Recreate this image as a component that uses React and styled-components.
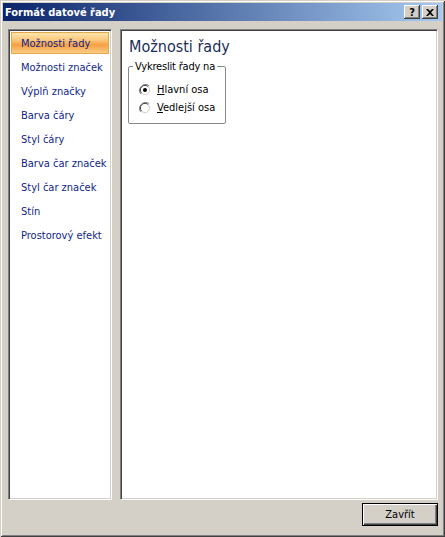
import React from 'react';
import styled, { createGlobalStyle } from 'styled-components';

const GlobalStyle = createGlobalStyle`
  html, body {
    margin: 0;
    padding: 0;
    background: #d4d0c8;
  }
  body {
    font-family: Tahoma, "DejaVu Sans Condensed", "Liberation Sans", sans-serif;
    font-size: 11px;
  }
`;

const navItems = [
  'Možnosti řady',
  'Možnosti značek',
  'Výplň značky',
  'Barva čáry',
  'Styl čáry',
  'Barva čar značek',
  'Styl čar značek',
  'Stín',
  'Prostorový efekt',
];

const Window = styled.div`
  width: 445px;
  height: 537px;
  box-sizing: border-box;
  background: #d4d0c8;
  padding: 3px;
  display: flex;
  flex-direction: column;
  box-shadow: inset 1px 1px #d4d0c8, inset -1px -1px #404040,
    inset 2px 2px #ffffff, inset -2px -2px #808080;
`;

const TitleBar = styled.div`
  height: 18px;
  display: flex;
  align-items: center;
  justify-content: space-between;
  padding: 0 4px 0 2px;
  background: linear-gradient(to right, #0a246a, #a6caf0);
`;

const Title = styled.span`
  color: #fff;
  font-weight: bold;
  font-size: 11px;
`;

const TitleButtons = styled.div`
  display: flex;
  gap: 2px;
`;

const TitleButton = styled.div`
  width: 16px;
  height: 14px;
  box-sizing: border-box;
  background: #d4d0c8;
  display: flex;
  align-items: center;
  justify-content: center;
  font-weight: bold;
  font-size: 11px;
  color: #000;
  box-shadow: inset -1px -1px #404040, inset 1px 1px #ffffff,
    inset -2px -2px #808080;
`;

const Body = styled.div`
  flex: 1;
  display: flex;
  flex-direction: column;
  padding: 8px 4px 8px 5px;
`;

const Panels = styled.div`
  flex: 1;
  display: flex;
  gap: 8px;
`;

const Sunken = styled.div`
  box-sizing: border-box;
  background: #fff;
  border: 1px solid;
  border-color: #808080 #ffffff #ffffff #808080;
  box-shadow: inset 1px 1px #404040, inset -1px -1px #d4d0c8;
`;

const NavPanel = styled(Sunken)`
  width: 104px;
  padding: 2px 2px;
  display: flex;
  flex-direction: column;
`;

const NavItem = styled.div`
  height: 22px;
  margin-bottom: 2px;
  box-sizing: border-box;
  display: flex;
  align-items: center;
  padding-left: 9px;
  color: #0f1f8a;
  white-space: nowrap;
  border: 1px solid ${p => (p.$active ? '#e3a84c' : 'transparent')};
  background: ${p =>
    p.$active
      ? 'linear-gradient(to bottom, #fde6ab 0%, #fbc77c 35%, #f5a043 60%, #fbcd84 100%)'
      : 'transparent'};
`;

const ContentPanel = styled(Sunken)`
  flex: 1;
  padding: 7px 7px;
`;

const Heading = styled.div`
  font-size: 16px;
  color: #1b2e5a;
  margin: 0 0 4px 1px;
`;

const Group = styled.fieldset`
  width: 98px;
  min-width: 0;
  height: 64px;
  box-sizing: border-box;
  margin: 0;
  padding: 10px 0 0 0;
  border: 1px solid #8a8a8a;
  border-radius: 2px;
  display: flex;
  flex-direction: column;
  gap: 5px;
`;

const Legend = styled.legend`
  padding: 0 2px;
  margin-left: 4px;
  color: #000;
  white-space: nowrap;
  letter-spacing: -0.2px;
`;

const RadioRow = styled.label`
  display: flex;
  align-items: center;
  gap: 6px;
  margin-left: 10px;
  color: #000;
  white-space: nowrap;
`;

const Radio = ({ checked }) => (
  <svg width="12" height="12" viewBox="0 0 12 12">
    <path d="M10.2 1.8 A6 6 0 0 0 1.8 10.2" fill="none" stroke="#808080" strokeWidth="1" />
    <path d="M1.8 10.2 A6 6 0 0 0 10.2 1.8" fill="none" stroke="#ffffff" strokeWidth="1" />
    <circle cx="6" cy="6" r="4.6" fill="#fff" />
    <path d="M9.3 2.7 A4.6 4.6 0 0 0 2.7 9.3" fill="none" stroke="#404040" strokeWidth="1" />
    <path d="M2.7 9.3 A4.6 4.6 0 0 0 9.3 2.7" fill="none" stroke="#d4d0c8" strokeWidth="1" />
    {checked && <circle cx="6" cy="6" r="2" fill="#000" />}
  </svg>
);

const Footer = styled.div`
  display: flex;
  justify-content: flex-end;
  padding-top: 3px;
`;

const Button = styled.button`
  width: 76px;
  height: 23px;
  font-family: inherit;
  font-size: 11px;
  color: #000;
  background: #d4d0c8;
  border: 1px solid #000;
  box-shadow: inset 1px 1px #ffffff, inset -1px -1px #404040,
    inset -2px -2px #808080;
  padding: 0;
`;

export default function App() {
  return (
    <Window>
      <GlobalStyle />
      <TitleBar>
        <Title>Formát datové řady</Title>
        <TitleButtons>
          <TitleButton>?</TitleButton>
          <TitleButton>
            <svg width="8" height="7" viewBox="0 0 8 7">
              <path d="M0 0 L2 0 L4 2 L6 0 L8 0 L5 3.5 L8 7 L6 7 L4 5 L2 7 L0 7 L3 3.5 Z" fill="#000" />
            </svg>
          </TitleButton>
        </TitleButtons>
      </TitleBar>
      <Body>
        <Panels>
          <NavPanel>
            {navItems.map((item, i) => (
              <NavItem key={item} $active={i === 0}>{item}</NavItem>
            ))}
          </NavPanel>
          <ContentPanel>
            <Heading>Možnosti řady</Heading>
            <Group>
              <Legend>Vykreslit řady na</Legend>
              <RadioRow>
                <Radio checked />
                <span><u>H</u>lavní osa</span>
              </RadioRow>
              <RadioRow>
                <Radio />
                <span><u>V</u>edlejší osa</span>
              </RadioRow>
            </Group>
          </ContentPanel>
        </Panels>
        <Footer>
          <Button>Zavřít</Button>
        </Footer>
      </Body>
    </Window>
  );
}
